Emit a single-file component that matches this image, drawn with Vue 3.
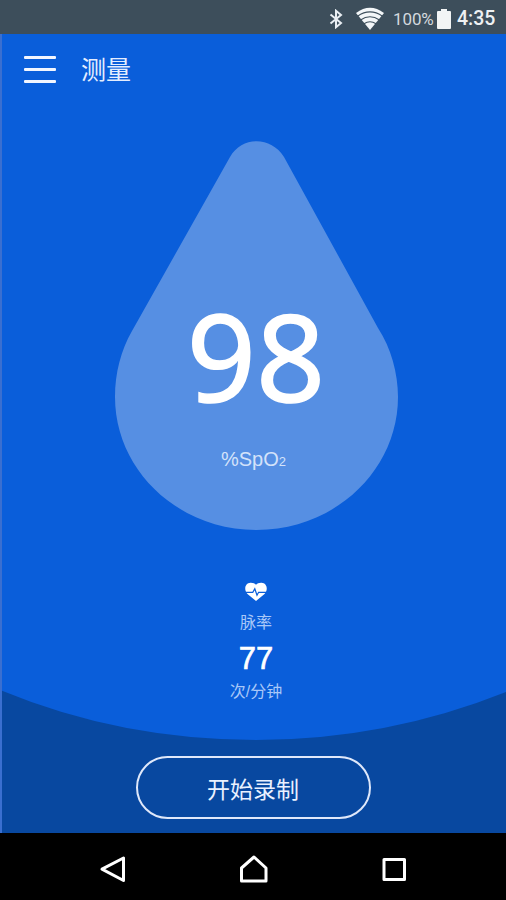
<template>
  <div class="phone">
    <header class="status-bar">
      <svg class="icon-bluetooth" viewBox="0 0 14 20">
        <path d="M1.500 5.500 L12 14 L7 18.200 V1.800 L12 6 L1.500 14.500" />
      </svg>
      <svg class="icon-wifi" viewBox="0 0 28 23">
        <path class="fan" d="M0 6 Q14 -4.500 28 6 L14 23 Z" />
        <path class="gap" d="M1.500 9.200 Q14 0.600 26.500 9.200 M4.500 13 Q14 6.400 23.500 13 M8 16.800 Q14 12.800 20 16.800" />
      </svg>
      <span class="battery-text">{{ battery }}%</span>
      <svg class="icon-battery" viewBox="0 0 14 20">
        <path d="M4 0 H10 V2 H13 Q14 2 14 3 V19 Q14 20 13 20 H1 Q0 20 0 19 V3 Q0 2 1 2 H4 Z" />
      </svg>
      <span class="clock">4:35</span>
    </header>

    <main class="screen">
      <svg class="screen-bg" viewBox="2 0 504 799">
        <path d="M0 656 Q120 706 256 706 Q386 706 506 658 V799 H0 Z" />
      </svg>

      <div class="title-bar">
        <button class="btn-menu" aria-label="菜单">
          <i></i>
          <i></i>
          <i></i>
        </button>
        <h1>测量</h1>
      </div>

      <section class="drop">
        <svg class="drop-shape" viewBox="0 0 283 389">
          <path
            d="M115 16 C127 -5 156 -5 169 16 L263 187 C276 207 283 232 283 256 C283 329 220 389 141.500 389 C63 389 0 329 0 256 C0 232 6 209 17 190 Z"
          />
        </svg>
        <div class="drop-value">{{ spo2 }}</div>
        <div class="drop-unit">%SpO<small>2</small></div>
      </section>

      <section class="pulse">
        <svg class="icon-heart" viewBox="0 0 22 20">
          <path class="heart" d="M11 19 L2.500 12 C-1.500 7.500 0 1 5.500 0.700 C8 0.600 10 1.500 11 2.800 C12 1.500 14 0.600 16.500 0.700 C22 1 23.500 7.500 19.500 12 Z" />
          <path class="beat" d="M1 10.300 H7.800 L9.800 6.800 L12 13.200 L13.600 10.300 H21" />
        </svg>
        <div class="pulse-label">脉率</div>
        <div class="pulse-value">{{ pulse }}</div>
        <div class="pulse-unit">次/分钟</div>
      </section>

      <button class="btn-record">开始录制</button>
    </main>

    <nav class="nav-bar">
      <svg viewBox="0 0 30 30">
        <path d="M25.500 4 V26.500 L4 15.200 Z" />
      </svg>
      <svg viewBox="0 0 30 30">
        <path d="M15 3 L27 14 V27 H2.500 V14 Z" />
      </svg>
      <svg viewBox="0 0 30 30">
        <path d="M5 5.500 H25.500 V25.500 H5 Z" />
      </svg>
    </nav>
  </div>
</template>

<script setup>
import { ref } from "vue";

const battery = ref(100);
const spo2 = ref(98);
const pulse = ref(77);
</script>

<style>
body {
  margin: 0;
  background: #000;
}
</style>

<style scoped>
.phone {
  width: 506px;
  height: 900px;
  display: flex;
  flex-direction: column;
  overflow: hidden;
  font-family: "Liberation Sans", "Noto Sans CJK SC", sans-serif;
  color: #fff;
}

.status-bar {
  height: 34px;
  flex: none;
  box-sizing: border-box;
  padding: 3px 11px 0 0;
  display: flex;
  align-items: center;
  justify-content: flex-end;
  background: #3d4e5b;
  font-family: Roboto, sans-serif;
}

.icon-bluetooth {
  width: 14px;
  height: 20px;
  margin-right: 13px;
  fill: none;
  stroke: #e9eef3;
  stroke-width: 2;
}

.icon-wifi {
  width: 28px;
  height: 23px;
  margin-right: 9px;
}

.icon-wifi .fan {
  fill: #f3f6f8;
}

.icon-wifi .gap {
  fill: none;
  stroke: #3d4e5b;
  stroke-width: 1.1;
}

.battery-text {
  width: 40px;
  margin-right: 4px;
  font-size: 17px;
  line-height: 20px;
  letter-spacing: -0.1px;
  white-space: nowrap;
  color: #d3d9de;
}

.icon-battery {
  width: 14px;
  height: 20px;
  margin-right: 6px;
  fill: #f2f4f5;
}

.clock {
  width: 38px;
  font-size: 19.5px;
  font-weight: 500;
  line-height: 22px;
  white-space: nowrap;
  color: #eef1f3;
}

.screen {
  position: relative;
  height: 799px;
  flex: none;
  box-sizing: border-box;
  border-left: 2px solid #3a6fd0;
  display: flex;
  flex-direction: column;
  align-items: center;
  background: #0a5eda;
}

.screen-bg {
  position: absolute;
  top: 0;
  left: 0;
  width: 504px;
  height: 799px;
  fill: #0848a0;
}

.screen > :not(.screen-bg) {
  position: relative;
}

.title-bar {
  align-self: stretch;
  height: 70px;
  box-sizing: border-box;
  padding-left: 22px;
  display: flex;
  align-items: center;
}

.title-bar h1 {
  margin: 1px 0 0 25px;
  font-size: 25px;
  font-weight: 400;
  line-height: 36px;
  color: #e4edff;
}

.btn-menu {
  width: 32px;
  padding: 0;
  border: none;
  background: none;
  display: flex;
  flex-direction: column;
  gap: 9px;
  cursor: pointer;
}

.btn-menu i {
  height: 3px;
  border-radius: 1px;
  background: #f2f6ff;
}

.drop {
  width: 283px;
  height: 389px;
  margin: 37px 0 0 4px;
  display: grid;
  grid-template-rows: 153px 122px 114px;
  justify-items: center;
}

.drop-shape {
  grid-area: 1 / 1 / 4 / 2;
  width: 283px;
  height: 389px;
  fill: #568fe3;
}

.drop-value {
  grid-area: 2 / 1;
  font-family: "Noto Sans", sans-serif;
  font-size: 121px;
  line-height: 122px;
  -webkit-text-stroke: 1.5px #fff;
}

.drop-unit {
  grid-area: 3 / 1;
  padding: 31px 5px 0 0;
  font-size: 20px;
  line-height: 24px;
  color: #d3e2fa;
}

.drop-unit small {
  font-size: 13px;
}

.pulse {
  margin: 52px 0 0 4px;
  display: flex;
  flex-direction: column;
  align-items: center;
}

.icon-heart {
  width: 22px;
  height: 20px;
}

.icon-heart .heart {
  fill: #fff;
}

.icon-heart .beat {
  fill: none;
  stroke: #0a5eda;
  stroke-width: 1.2;
}

.pulse-label {
  margin-top: 9px;
  font-size: 16px;
  line-height: 24px;
  color: #a9c8f8;
}

.pulse-value {
  margin-top: 7px;
  font-size: 31px;
  line-height: 34px;
  -webkit-text-stroke: 0.6px #fff;
}

.pulse-unit {
  margin-top: 4px;
  font-size: 16px;
  line-height: 24px;
  color: #a9c8f8;
}

.btn-record {
  width: 235px;
  height: 63px;
  margin: 52px 2px 0 0;
  padding: 0;
  border: 2px solid #dfe8fa;
  border-radius: 32px;
  background: transparent;
  color: #eaf1ff;
  font-family: inherit;
  font-size: 23px;
  cursor: pointer;
}

.nav-bar {
  height: 67px;
  flex: none;
  box-sizing: border-box;
  padding: 5px 97px 0 98px;
  display: flex;
  align-items: center;
  justify-content: space-between;
  background: #000;
}

.nav-bar svg {
  width: 30px;
  height: 30px;
  fill: none;
  stroke: #fff;
  stroke-width: 3;
  stroke-linejoin: round;
}
</style>
